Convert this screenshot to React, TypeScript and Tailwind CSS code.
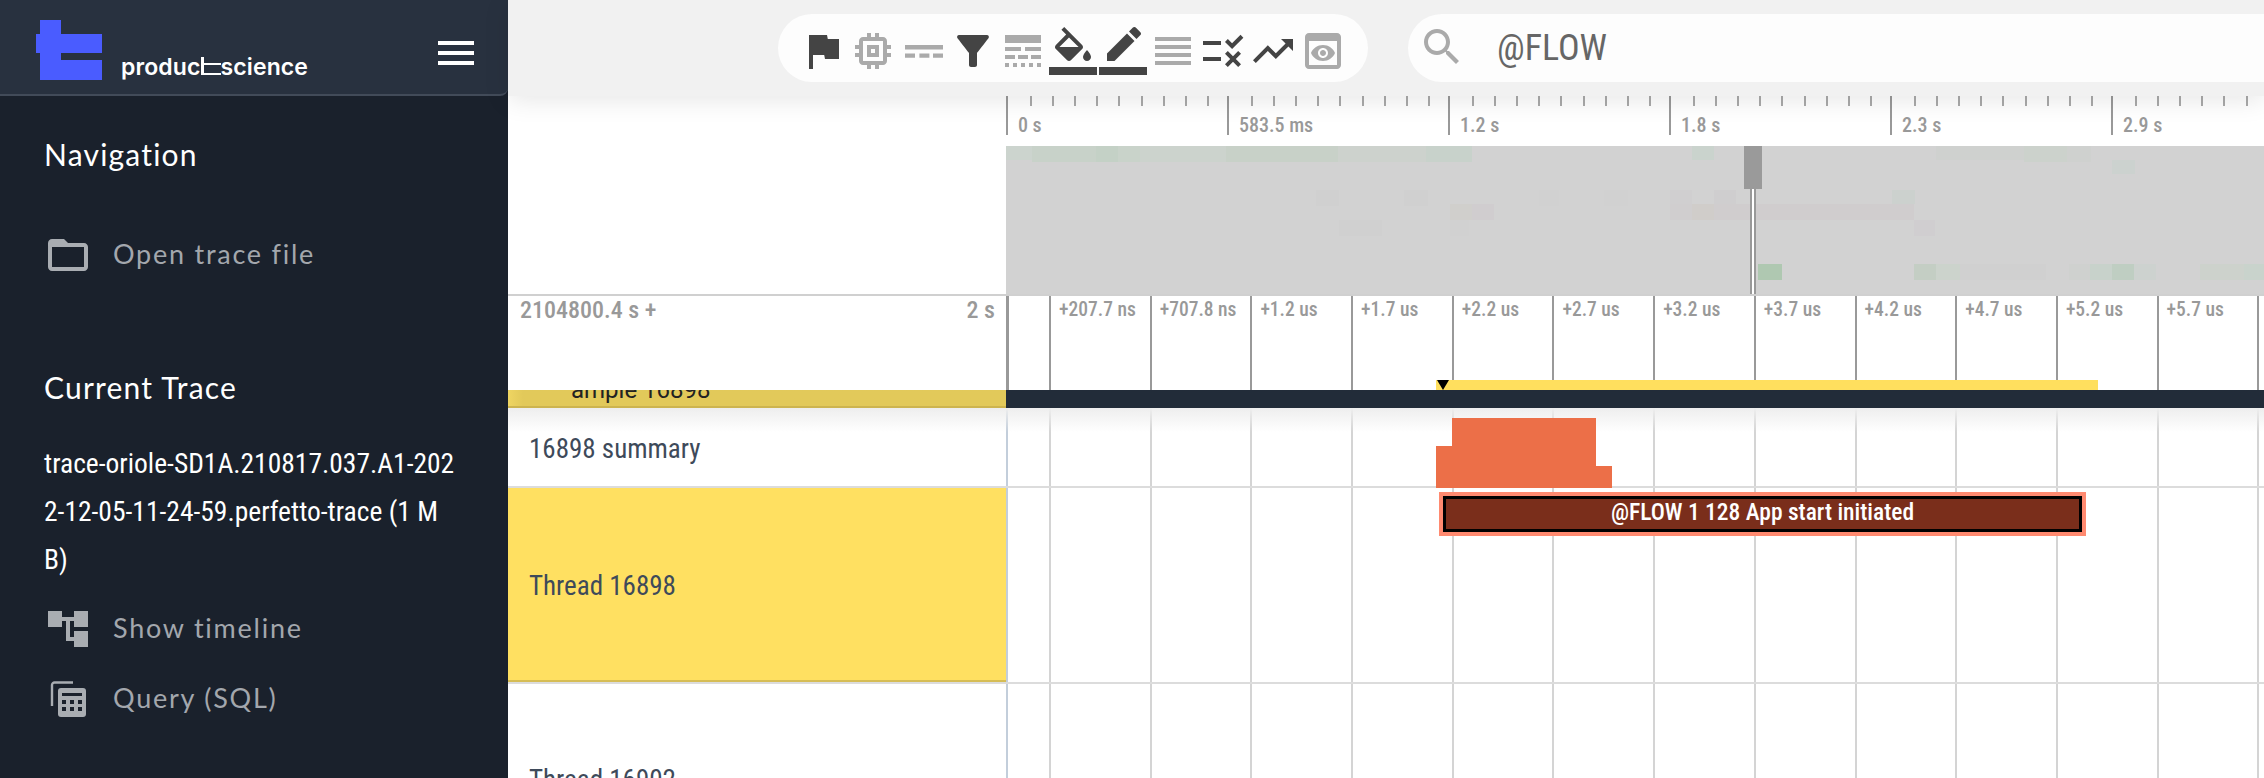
import React from "react";

const condensed = "font-['Roboto',sans-serif] [font-stretch:75%]";
const navFont = "font-['Lato',sans-serif]";

const rulerLabels = ["0 s", "583.5 ms", "1.2 s", "1.8 s", "2.3 s", "2.9 s"];
const axisLabels = [
  "+207.7 ns",
  "+707.8 ns",
  "+1.2 us",
  "+1.7 us",
  "+2.2 us",
  "+2.7 us",
  "+3.2 us",
  "+3.7 us",
  "+4.2 us",
  "+4.7 us",
  "+5.2 us",
  "+5.7 us",
  "",
];

// x, y, width, height, colour of each overview cell (x and y from the top left of the overview)
const cells: [number, number, number, number, string][] = [
  [0, 0, 26, 14, "#ccd4ce"],
  [26, 0, 64, 16, "#c8d2c9"],
  [90, 0, 22, 16, "#c4d1c6"],
  [112, 0, 22, 16, "#c9d3ca"],
  [134, 0, 86, 16, "#ccd3cd"],
  [220, 0, 112, 16, "#c8d1c8"],
  [332, 0, 88, 16, "#cdd2cd"],
  [420, 0, 46, 16, "#c8d2cb"],
  [310, 44, 23, 16, "#d0d0d0"],
  [398, 44, 24, 16, "#d0d0d0"],
  [533, 44, 20, 16, "#d1d1d1"],
  [598, 44, 24, 16, "#d1d1d1"],
  [444, 58, 22, 16, "#d0cfcc"],
  [466, 58, 22, 16, "#d0cdcf"],
  [333, 74, 43, 16, "#d0d0d0"],
  [444, 74, 19, 16, "#d1d1d1"],
  [686, 0, 22, 14, "#cad3cd"],
  [930, 0, 88, 14, "#cfd1cf"],
  [1018, 0, 43, 16, "#ccd2cc"],
  [1061, 0, 24, 16, "#cfd1cf"],
  [1106, 14, 23, 14, "#ccd2cf"],
  [664, 44, 22, 14, "#d0cfd0"],
  [708, 44, 22, 14, "#cfcecf"],
  [886, 44, 23, 14, "#ccd1ce"],
  [664, 58, 22, 16, "#d0cecf"],
  [686, 58, 22, 16, "#d0cdca"],
  [708, 58, 200, 16, "#d0cdce"],
  [908, 74, 21, 16, "#d0ced0"],
  [752, 118, 24, 16, "#afc8b1"],
  [908, 118, 22, 16, "#c4cec4"],
  [930, 118, 24, 16, "#ccd3cc"],
  [954, 118, 86, 16, "#d0d0d0"],
  [1063, 118, 21, 16, "#cfd1cf"],
  [1084, 118, 22, 16, "#c8d2cb"],
  [1106, 118, 22, 16, "#bfcec2"],
  [1128, 118, 22, 16, "#cdd2cf"],
  [1194, 118, 44, 16, "#cdd2cc"],
  [1238, 118, 20, 16, "#c9d3cc"],
];

function Icon({ d, className }: { d: string; className: string }) {
  return (
    <svg viewBox="0 0 24 24" fill="currentColor" className={`h-12 w-12 shrink-0 ${className}`}>
      <path d={d} />
    </svg>
  );
}

function DashIcon() {
  return (
    <svg viewBox="0 0 24 24" fill="currentColor" className="h-12 w-12 shrink-0 text-[#aaa]">
      <path d="M3 9h19v2.2H3zM3 13.2h5v2.2H3zM10.2 13.2h5v2.2h-5zM17 13.2h5v2.2h-5z" />
    </svg>
  );
}

function Logo() {
  return (
    <svg viewBox="0 0 66 60" className="h-[60px] w-[66px] shrink-0 fill-[#4a5cff]">
      <path d="M4 0h21v14h41v19H25v7h41v20H4V33H0V14h4z" />
    </svg>
  );
}

function Wordmark() {
  return (
    <div className="flex items-baseline font-['Inter',sans-serif] text-[23px] leading-[26px] font-semibold tracking-[0.005em] text-white">
      <span>produc</span>
      <svg viewBox="0 0 20 18" className="h-[18px] w-[20px] shrink-0 fill-white">
        <path d="M0 0h3v6h17v2H3v8h17v2H0z" />
      </svg>
      <span>science</span>
    </div>
  );
}

function QueryIcon() {
  return (
    <svg viewBox="0 0 36 36" className="ml-[6px] h-9 w-9 shrink-0 text-[#a9adb2]">
      <path d="M2 25V4a2.5 2.5 0 0 1 2.5-2.5H23" fill="none" stroke="currentColor" strokeWidth="2.4" />
      <rect x="8" y="7" width="28" height="29" rx="3" fill="currentColor" />
      <path
        d="M12 12h20v3H12zM12 19h4v4h-4zM20 19h4v4h-4zM28 19h4v4h-4zM12 26h4v4h-4zM20 26h4v4h-4zM28 26h4v4h-4z"
        fill="#1a212c"
      />
    </svg>
  );
}

function NavItem({ icon, label, className }: { icon: React.ReactNode; label: string; className: string }) {
  return (
    <div className={`flex h-12 items-center ${className}`}>
      <div className="flex w-[69px] shrink-0 items-center">{icon}</div>
      <span className={`${navFont} mb-[2px] text-[27px] tracking-[0.065em] text-[#a3a7ad]`}>{label}</span>
    </div>
  );
}

function Sidebar() {
  return (
    <aside className="flex h-full w-[508px] shrink-0 flex-col bg-[#1a212c]">
      <header className="flex h-[96px] shrink-0 items-start justify-between rounded-br-[8px] border-b-2 border-[#424b59] bg-[#28313f] pt-[20px] pr-[34px] pl-[36px]">
        <div className="flex items-end gap-[19px]">
          <Logo />
          <Wordmark />
        </div>
        <div className="mt-[21px] flex w-[36px] flex-col gap-[6px]">
          <div className="h-1 bg-white" />
          <div className="h-1 bg-white" />
          <div className="h-1 bg-white" />
        </div>
      </header>
      <div className="pl-[44px]">
        <h2 className={`${navFont} mt-[40px] text-[30px] leading-[36px] tracking-[0.04em] text-white`}>Navigation</h2>
      </div>
      <NavItem
        className="mt-[59px] pl-[44px]"
        label="Open trace file"
        icon={
          <Icon
            className="text-[#a9adb2]"
            d="M20 6h-8l-2-2H4c-1.1 0-1.99.9-1.99 2L2 18c0 1.1.9 2 2 2h16c1.1 0 2-.9 2-2V8c0-1.1-.9-2-2-2zm0 12H4V8h16v10z"
          />
        }
      />
      <div className="pl-[44px]">
        <h2 className={`${navFont} mt-[90px] text-[30px] leading-[36px] tracking-[0.04em] text-white`}>Current Trace</h2>
        <p className={`${condensed} mt-[35px] w-[416px] text-[27.5px] leading-[48px] break-all text-white`}>
          trace-oriole-SD1A.210817.037.A1-2022-12-05-11-24-59.perfetto-trace (1 MB)
        </p>
      </div>
      <NavItem
        className="mt-[21px] pl-[44px]"
        label="Show timeline"
        icon={
          <Icon
            className="text-[#a9adb2]"
            d="M22 11V3h-7v3H9V3H2v8h7V8h2v10h4v3h7v-8h-7v3h-2V8h2v3z"
          />
        }
      />
      <NavItem className="mt-[22px] pl-[44px]" label="Query (SQL)" icon={<QueryIcon />} />
    </aside>
  );
}

function Topbar() {
  const dark = "text-[#444]";
  const light = "text-[#aaa]";
  return (
    <div className="relative z-20 flex h-[96px] shrink-0 items-start bg-[#f1f1f1] pt-[14px] pl-[270px] shadow-[0_4px_24px_rgba(0,0,0,0.1)]">
      <div className="flex h-[68px] w-[590px] shrink-0 items-start gap-[2px] rounded-[34px] bg-[#fdfdfd] pt-[13px] pl-[21px]">
        <Icon className={dark} d="M14.4 6L14 4H5v17h2v-7h5.6l.4 2h7V6z" />
        <Icon
          className={light}
          d="M15 9H9v6h6V9zm-2 4h-2v-2h2v2zm8-2V9h-2V7c0-1.1-.9-2-2-2h-2V3h-2v2h-2V3H9v2H7c-1.1 0-2 .9-2 2v2H3v2h2v2H3v2h2v2c0 1.1.9 2 2 2h2v2h2v-2h2v2h2v-2h2c1.1 0 2-.9 2-2v-2h2v-2h-2v-2h2zm-4 6H7V7h10v10z"
        />
        <DashIcon />
        <Icon
          className={dark}
          d="M4.25 5.61C6.27 8.2 10 13 10 13v6c0 .55.45 1 1 1h2c.55 0 1-.45 1-1v-6s3.72-4.8 5.74-7.39c.51-.66.04-1.61-.79-1.61H5.04c-.83 0-1.3.95-.79 1.61z"
        />
        <Icon
          className={light}
          d="M3 16h5v-2H3v2zm6.5 0h5v-2h-5v2zm6.5 0h5v-2h-5v2zM3 20h2v-2H3v2zm4 0h2v-2H7v2zm4 0h2v-2h-2v2zm4 0h2v-2h-2v2zm4 0h2v-2h-2v2zM3 12h8v-2H3v2zm10 0h8v-2h-8v2zM3 4v4h18V4H3z"
        />
        <Icon
          className={dark}
          d="M16.56 8.94L7.62 0 6.21 1.41l2.38 2.38-5.15 5.15c-.59.59-.59 1.54 0 2.12l5.5 5.5c.29.29.68.44 1.06.44s.77-.15 1.06-.44l5.5-5.5c.59-.58.59-1.53 0-2.12zM5.21 10L10 5.21 14.79 10H5.21zM19 11.5s-2 2.17-2 3.5c0 1.1.9 2 2 2s2-.9 2-2c0-1.33-2-3.5-2-3.5zM0 20h24v4H0z"
        />
        <Icon
          className={dark}
          d="M17.75 7L14 3.25l-10 10V17h3.75l10-10zm2.96-2.96c.39-.39.39-1.02 0-1.41L18.37.29c-.39-.39-1.02-.39-1.41 0L15 2.25 18.75 6l1.96-1.96zM0 20h24v4H0z"
        />
        <Icon className={light} d="M3 15h18v-2H3v2zm0 4h18v-2H3v2zm0-8h18V9H3v2zm0-6v2h18V5H3z" />
        <Icon
          className={dark}
          d="M16.54 11L13 7.46l1.41-1.41 2.12 2.12 4.24-4.24 1.41 1.41L16.54 11zM11 7H2v2h9V7zm10 6.41L19.59 12 17 14.59 14.41 12 13 13.41 15.59 16 13 18.59 14.41 20 17 17.41 19.59 20 21 18.59 18.41 16 21 13.41zM11 15H2v2h9v-2z"
        />
        <Icon className={dark} d="M16 6l2.29 2.29-4.88 4.88-4-4L2 16.59 3.41 18l6-6 4 4 6.3-6.29L22 12V6z" />
        <Icon
          className={light}
          d="M19 3H5c-1.11 0-2 .9-2 2v14c0 1.1.89 2 2 2h14c1.1 0 2-.9 2-2V5c0-1.1-.89-2-2-2zm0 16H5V7h14v12zm-5.5-6c0 .83-.67 1.5-1.5 1.5s-1.5-.67-1.5-1.5.67-1.5 1.5-1.5 1.5.67 1.5 1.5zM12 9c-2.73 0-5.06 1.66-6 4 .94 2.34 3.27 4 6 4s5.06-1.66 6-4c-.94-2.34-3.27-4-6-4zm0 6.5c-1.38 0-2.5-1.12-2.5-2.5s1.12-2.5 2.5-2.5 2.5 1.12 2.5 2.5-1.12 2.5-2.5 2.5z"
        />
      </div>
      <div className="ml-[40px] flex h-[68px] flex-1 items-start rounded-l-[34px] bg-[#fdfdfd] pt-[9px] pl-[10px]">
        <Icon
          className={light}
          d="M15.5 14h-.79l-.28-.27C15.41 12.59 16 11.11 16 9.5 16 5.91 13.09 3 9.5 3S3 5.91 3 9.5 5.91 16 9.5 16c1.61 0 3.09-.59 4.23-1.57l.27.28v.79l5 4.99L20.49 19l-4.99-5zm-6 0C7.01 14 5 11.99 5 9.5S7.01 5 9.5 5 14 7.01 14 9.5 11.99 14 9.5 14z"
        />
        <span className={`${condensed} ml-[31px] text-[36px] leading-[50px] text-[#666]`}>@FLOW</span>
      </div>
    </div>
  );
}

function OverviewRuler() {
  return (
    <div className="flex h-[50px] shrink-0">
      <div className="w-[498px] shrink-0" />
      <div className="flex flex-1 overflow-hidden">
        {rulerLabels.map((label) => (
          <div key={label} className="h-[39px] w-[221px] shrink-0 border-l-2 border-[#999]">
            <div className="flex h-[10px]">
              {[0, 1, 2, 3, 4, 5, 6, 7, 8, 9].map((i) => (
                <div key={i} className={`w-[22.1px] shrink-0 ${i === 0 ? "" : "border-l-2 border-[#aaa]"}`} />
              ))}
            </div>
            <div className={`${condensed} pt-[8px] pl-[10px] text-[20px] leading-[22px] font-medium text-[#999]`}>
              {label}
            </div>
          </div>
        ))}
      </div>
    </div>
  );
}

function Overview() {
  return (
    <div className="flex h-[150px] shrink-0 border-b-2 border-[#d0d0d0]">
      <div className="w-[498px] shrink-0" />
      <svg viewBox="0 0 1258 148" className="h-[148px] w-[1258px] shrink-0 bg-[#d2d2d2]">
        {cells.map(([x, y, w, h, fill], i) => (
          <rect key={i} x={x} y={y} width={w} height={h} fill={fill} />
        ))}
        <rect x="738" y="0" width="18" height="43" fill="#9a9a9a" />
        <rect x="744" y="43" width="2" height="105" fill="#999" />
        <rect x="746" y="43" width="2" height="105" fill="#fff" />
        <rect x="748" y="43" width="2" height="105" fill="#999" />
      </svg>
    </div>
  );
}

function TimeAxis() {
  return (
    <div className="flex h-[94px] shrink-0">
      <div className={`${condensed} flex w-[498px] shrink-0 justify-between pt-[1px] pr-[11px] pl-[12px] text-[24px] leading-[26px] font-medium text-[#999]`}>
        <span>2104800.4 s +</span>
        <span>2 s</span>
      </div>
      <div className="relative flex flex-1 overflow-hidden">
        <div className="h-full w-[43px] shrink-0 border-l-[3px] border-[#999]" />
        {axisLabels.map((label, i) => (
          <div
            key={i}
            className={`${condensed} h-full w-[100.7px] shrink-0 border-l-2 border-[#999] pt-[2px] pl-[8px] text-[19.5px] leading-[24px] font-medium whitespace-nowrap text-[#999]`}
          >
            {label}
          </div>
        ))}
        <div className="absolute bottom-0 left-[430px] h-[10px] w-[662px] bg-[#ffdf5e]" />
        <svg viewBox="0 0 12 10" className="absolute bottom-0 left-[431px] h-[10px] w-[12px] fill-black">
          <path d="M0 0h12L6 10z" />
        </svg>
      </div>
    </div>
  );
}

function PinnedBand() {
  return (
    <div className="flex h-[18px] shrink-0">
      <div className="h-full w-[498px] shrink-0 overflow-hidden border-b-2 border-[#cdb44f] bg-gradient-to-r from-[#efd562] from-0% to-[#e2c95a] to-[3%] pl-[63px]">
        <div className="mt-[-14px] font-['Roboto',sans-serif] text-[24px] leading-[28px] text-[#222]">ample 16898</div>
      </div>
      <div className="h-full flex-1 bg-[#222c39]" />
    </div>
  );
}

function GridLines() {
  return (
    <div className="pointer-events-none absolute inset-0 flex overflow-hidden">
      <div className="h-full w-[43px] shrink-0 border-l-2 border-[#c3cedb]" />
      {axisLabels.map((label, i) => (
        <div key={i} className="h-full w-[100.7px] shrink-0 border-l-2 border-[#d4d4d4]" />
      ))}
    </div>
  );
}

function Tracks() {
  return (
    <div className="relative min-h-0 flex-1 overflow-hidden">
      <div className="flex h-[80px] border-b-2 border-[#dcdcdc]">
        <div className={`${condensed} flex w-[498px] shrink-0 items-center pt-[4px] pl-[21px] text-[27px] text-[#3e4a5a]`}>
          16898 summary
        </div>
        <div className="relative flex-1">
          <GridLines />
        </div>
      </div>
      <div className="flex h-[196px] border-b-2 border-[#dcdcdc]">
        <div className={`${condensed} flex w-[498px] shrink-0 items-center border-b-2 border-[#d6bd55] bg-[#ffe061] pt-[4px] pl-[21px] text-[27px] text-[#3e4a5a]`}>
          Thread 16898
        </div>
        <div className="relative flex-1">
          <GridLines />
          <div className="absolute top-[4px] left-[433px] h-[44px] w-[647px] border-4 border-[#ff8a70]">
            <div
              className={`${condensed} flex h-full items-center justify-center border-[3px] border-black bg-[#7a2e1b] pb-[2px] text-[23.5px] font-medium text-white`}
            >
              @FLOW 1 128 App start initiated
            </div>
          </div>
        </div>
      </div>
      <div className="flex h-[94px]">
        <div className={`${condensed} w-[498px] shrink-0 pt-[81px] pl-[21px] text-[27px] leading-[30px] text-[#3e4a5a]`}>
          Thread 16902
        </div>
        <div className="relative flex-1">
          <GridLines />
        </div>
      </div>
      <div className="pointer-events-none absolute inset-x-0 top-0 h-[24px] bg-gradient-to-b from-[#eeeeee] to-transparent" />
      <svg viewBox="0 0 176 70" className="absolute top-[10px] left-[928px] h-[70px] w-[176px] fill-[#ec6f48]">
        <path d="M16 0H160V48H176V70H0V28H16Z" />
      </svg>
    </div>
  );
}

export default function App() {
  return (
    <div className="flex h-[778px] w-[2264px] overflow-hidden bg-white">
      <Sidebar />
      <main className="flex min-w-0 flex-1 flex-col">
        <Topbar />
        <OverviewRuler />
        <Overview />
        <TimeAxis />
        <PinnedBand />
        <Tracks />
      </main>
    </div>
  );
}
